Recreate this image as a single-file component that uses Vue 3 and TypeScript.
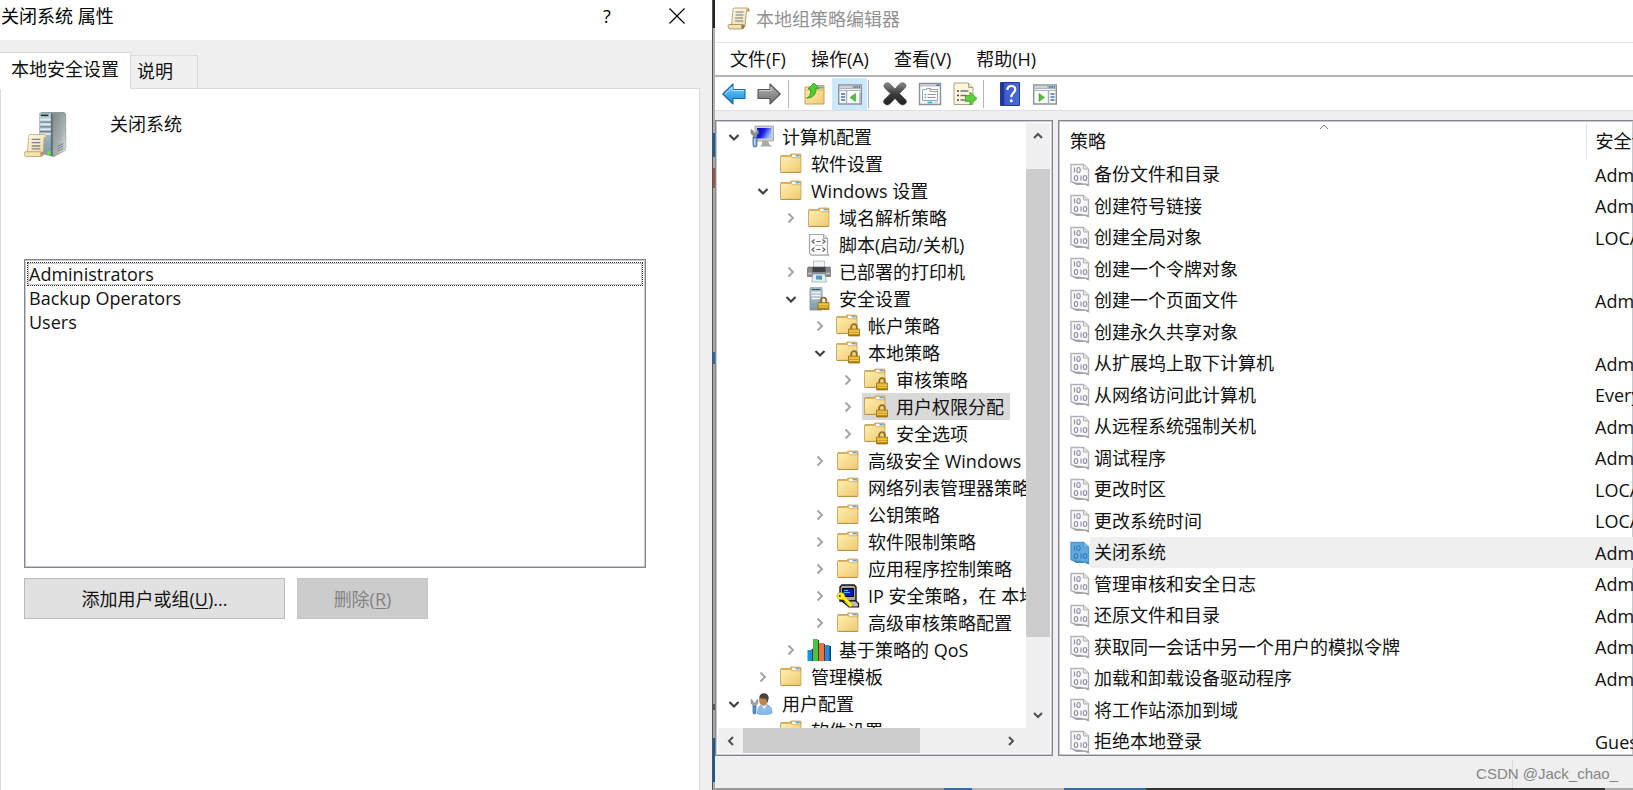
<script setup lang="ts">
import { ref } from 'vue'

interface TreeNode {
  level: number
  icon: string
  label: string
  state: 'open' | 'closed' | 'leaf'
}

interface Policy {
  name: string
  setting: string
}

const members = ['Administrators', 'Backup Operators', 'Users']
const menus = ['文件(F)', '操作(A)', '查看(V)', '帮助(H)']
const activeTab = ref(0)
const activeMember = ref(0)
const selectedNode = ref(10)
const selectedPolicy = ref(12)

const toolbar = [
  [
    { icon: 'back', label: '后退' },
    { icon: 'forward', label: '前进' },
  ],
  [
    { icon: 'up', label: '上移一级' },
    { icon: 'pane-left', label: '显示/隐藏控制台树', pressed: true },
  ],
  [
    { icon: 'delete', label: '删除' },
    { icon: 'props', label: '属性' },
    { icon: 'export', label: '导出列表' },
  ],
  [
    { icon: 'help', label: '帮助' },
    { icon: 'pane-right', label: '显示/隐藏操作窗格' },
  ],
]

const tree: TreeNode[] = [
  { level: 0, icon: 'computer', label: '计算机配置', state: 'open' },
  { level: 1, icon: 'folder', label: '软件设置', state: 'leaf' },
  { level: 1, icon: 'folder', label: 'Windows 设置', state: 'open' },
  { level: 2, icon: 'folder', label: '域名解析策略', state: 'closed' },
  { level: 2, icon: 'script', label: '脚本(启动/关机)', state: 'leaf' },
  { level: 2, icon: 'printer', label: '已部署的打印机', state: 'closed' },
  { level: 2, icon: 'secure', label: '安全设置', state: 'open' },
  { level: 3, icon: 'folder-lock', label: '帐户策略', state: 'closed' },
  { level: 3, icon: 'folder-lock', label: '本地策略', state: 'open' },
  { level: 4, icon: 'folder-lock', label: '审核策略', state: 'closed' },
  { level: 4, icon: 'folder-lock', label: '用户权限分配', state: 'closed' },
  { level: 4, icon: 'folder-lock', label: '安全选项', state: 'closed' },
  { level: 3, icon: 'folder', label: '高级安全 Windows', state: 'closed' },
  { level: 3, icon: 'folder', label: '网络列表管理器策略', state: 'leaf' },
  { level: 3, icon: 'folder', label: '公钥策略', state: 'closed' },
  { level: 3, icon: 'folder', label: '软件限制策略', state: 'closed' },
  { level: 3, icon: 'folder', label: '应用程序控制策略', state: 'closed' },
  { level: 3, icon: 'ipsec', label: 'IP 安全策略，在 本地计算机', state: 'closed' },
  { level: 3, icon: 'folder', label: '高级审核策略配置', state: 'closed' },
  { level: 2, icon: 'qos', label: '基于策略的 QoS', state: 'closed' },
  { level: 1, icon: 'folder', label: '管理模板', state: 'closed' },
  { level: 0, icon: 'user', label: '用户配置', state: 'open' },
  { level: 1, icon: 'folder', label: '软件设置', state: 'leaf' },
]

const policies: Policy[] = [
  { name: '备份文件和目录', setting: 'Administrators' },
  { name: '创建符号链接', setting: 'Administrators' },
  { name: '创建全局对象', setting: 'LOCAL SERVICE' },
  { name: '创建一个令牌对象', setting: '' },
  { name: '创建一个页面文件', setting: 'Administrators' },
  { name: '创建永久共享对象', setting: '' },
  { name: '从扩展坞上取下计算机', setting: 'Administrators' },
  { name: '从网络访问此计算机', setting: 'Everyone' },
  { name: '从远程系统强制关机', setting: 'Administrators' },
  { name: '调试程序', setting: 'Administrators' },
  { name: '更改时区', setting: 'LOCAL SERVICE' },
  { name: '更改系统时间', setting: 'LOCAL SERVICE' },
  { name: '关闭系统', setting: 'Administrators' },
  { name: '管理审核和安全日志', setting: 'Administrators' },
  { name: '还原文件和目录', setting: 'Administrators' },
  { name: '获取同一会话中另一个用户的模拟令牌', setting: 'Administrators' },
  { name: '加载和卸载设备驱动程序', setting: 'Administrators' },
  { name: '将工作站添加到域', setting: '' },
  { name: '拒绝本地登录', setting: 'Guest' },
]

const indent = (level: number) => ({ paddingLeft: `${8 + Math.round(level * 28.5)}px` })
</script>

<template>
  <svg class="defs" aria-hidden="true">
    <defs>
      <linearGradient id="gFolder" x1="0" y1="0" x2="1" y2="1">
        <stop offset="0" stop-color="#ffeeb0" /><stop offset="1" stop-color="#efca72" />
      </linearGradient>
      <linearGradient id="gGold" x1="0" y1="0" x2="0" y2="1">
        <stop offset="0" stop-color="#edc033" /><stop offset="1" stop-color="#b07a08" />
      </linearGradient>
      <linearGradient id="gBlue" x1="0" y1="0" x2="0" y2="1">
        <stop offset="0" stop-color="#7fd2fb" /><stop offset="1" stop-color="#1287d8" />
      </linearGradient>
      <linearGradient id="gGray" x1="0" y1="0" x2="0" y2="1">
        <stop offset="0" stop-color="#b4b4b4" /><stop offset="1" stop-color="#6e6e6e" />
      </linearGradient>
      <linearGradient id="gDark" x1="0" y1="0" x2="0" y2="1">
        <stop offset="0" stop-color="#8b8b8b" /><stop offset="0.5" stop-color="#3c3c3c" /><stop offset="1" stop-color="#222" />
      </linearGradient>
      <linearGradient id="gHelp" x1="0" y1="0" x2="1" y2="0">
        <stop offset="0" stop-color="#1c2f92" /><stop offset="0.25" stop-color="#3f5bcb" /><stop offset="1" stop-color="#4a6bdc" />
      </linearGradient>
      <linearGradient id="gScreen" x1="0" y1="0" x2="1" y2="0.4">
        <stop offset="0" stop-color="#0000b8" /><stop offset="0.5" stop-color="#1c1ce0" /><stop offset="1" stop-color="#9cc0ff" />
      </linearGradient>
      <linearGradient id="gServer" x1="0" y1="0" x2="1" y2="1">
        <stop offset="0" stop-color="#7c8889" /><stop offset="0.6" stop-color="#a9b2b2" /><stop offset="1" stop-color="#e2e6e5" />
      </linearGradient>
      <linearGradient id="gFront" x1="0" y1="0" x2="0" y2="1">
        <stop offset="0" stop-color="#c3d5de" /><stop offset="1" stop-color="#7d98a8" />
      </linearGradient>
      <linearGradient id="gPaper" x1="0" y1="0" x2="1" y2="1">
        <stop offset="0" stop-color="#fffbe9" /><stop offset="1" stop-color="#ecd9a2" />
      </linearGradient>
    </defs>

    <symbol id="folder" viewBox="0 0 24 24">
      <path d="M2 3.500h8.500l1.500-1.500h9a1 1 0 0 1 1 1V19.500a1 1 0 0 1-1 1H2.500a1 1 0 0 1-1-1V4.500z" fill="#dcb35b" stroke="#bd9549" stroke-width=".7" />
      <path d="M13 2.800h7.500v2.400H13z" fill="#fff" /><path d="M16.500 2.800h4v1.600h-4z" fill="#5aa7dc" />
      <path d="M2 5h10l1.500 1.300H21.500V20H2z" fill="url(#gFolder)" />
      <path d="M1.800 20.400h20" stroke="#b98f45" stroke-width="1" />
    </symbol>
    <symbol id="lock" viewBox="0 0 12 14">
      <path d="M3.200 7V4.500a2.800 2.800 0 0 1 5.600 0V7" fill="none" stroke="#8f6f25" stroke-width="1.800" />
      <path d="M.5 6.500h11V13.500H.5z" fill="url(#gGold)" stroke="#936506" stroke-width=".7" />
      <path d="M1 8.800h10M1 11h10" stroke="#f6d96c" stroke-width=".8" />
    </symbol>
    <symbol id="folder-lock" viewBox="0 0 24 24">
      <use href="#folder" x="-1" y="-1" width="24" height="24" />
      <use href="#lock" x="12" y="8" width="12" height="15" />
    </symbol>
    <symbol id="computer" viewBox="0 0 24 24">
      <path d="M5 1h18.500v15H5z" fill="#d3d1cb" stroke="#9a9a98" stroke-width=".8" />
      <path d="M7 3h14.500v10.500H7z" fill="url(#gScreen)" />
      <path d="M12 16h6l1.500 3.500 3 2H10l2-2z" fill="#aaa9a6" />
      <path d="M1 4.500v4l2.200 2v3h3.400v-3l2-2v-4L6.800 6v2.300H3.300V6z" fill="#8c9299" stroke="#5d646d" stroke-width=".5" />
      <path d="M3 12.500h4V20a2 2 0 0 1-4 0z" fill="#7fa9d8" stroke="#395f96" stroke-width=".8" />
      <path d="M4.700 14v6" stroke="#d9ecff" />
    </symbol>
    <symbol id="user" viewBox="0 0 24 24">
      <path d="M7.500 22c0-5.500 1.500-8.500 5-9.500h4c3.600 1 5.600 4 5.600 8.500-3 1.800-10 2-14.600 1z" fill="#8bbdea" stroke="#5d92c6" stroke-width=".6" />
      <path d="M11 12.500l3.200 5 2.800-5z" fill="#e6f2fd" />
      <ellipse cx="13.500" cy="8" rx="4.500" ry="5.800" fill="#bd8550" />
      <path d="M9.500 6c-.5-3 2-4.800 4.500-4.800 3.300 0 5.200 2.300 4.500 6l-1.300 3.500-1-4.200c-2 .4-4.700.3-6.700-.5z" fill="#4b4238" />
      <path d="M1.200 7.500v4L3 13.300V15h3v-1.700l1.700-1.800v-4L6 9v2H3V9z" fill="#a9adb2" stroke="#666c73" stroke-width=".6" />
      <path d="M3 14h3v6.500a1.500 1.500 0 0 1-3 0z" fill="#5f93cf" stroke="#33619e" stroke-width=".7" />
    </symbol>
    <symbol id="script" viewBox="0 0 24 24">
      <path d="M2.500 1.500h14l4 4V20l1 2.200H4L2.500 20z" fill="#fbfbfb" stroke="#a4a4a4" stroke-width="1.200" />
      <path d="M16.500 1.500v4h4" fill="#ddd" stroke="#a4a4a4" />
      <path d="M7.500 6.500L5 8.500l2.500 2M9.500 8.500h4M15.500 6.500l2.500 2-2.500 2M7.500 14.500L5 16.500l2.500 2M9.500 16.500h4M15.500 14.500l2.500 2-2.500 2" fill="none" stroke="#5c5c66" stroke-width="1.100" />
      <path d="M8 12.500h8" stroke="#9a9aa4" stroke-width=".7" />
    </symbol>
    <symbol id="printer" viewBox="0 0 24 24">
      <path d="M6.500 1h11v8h-11z" fill="#f2f3f4" stroke="#adb2b7" stroke-width=".8" />
      <path d="M1 7h22l.7 2v7.500H.3V9z" fill="#85888a" stroke="#5f6264" stroke-width=".6" />
      <path d="M5.500 7h13v5h-13z" fill="#3f4244" /><path d="M1 13.500h4M19 13.500h4" stroke="#c3c6c9" stroke-width="1.500" />
      <path d="M6 14h12l1.500 8h-15z" fill="#e3edf3" stroke="#8fa3b0" stroke-width=".7" />
      <path d="M9 15.500h6v4H9z" fill="#4a9bd6" /><path d="M12 17h3v2.500h-3z" fill="#56a55b" />
    </symbol>
    <symbol id="secure" viewBox="0 0 24 24">
      <path d="M3 1l2-1h9l1 1v22H3z" fill="url(#gFront)" stroke="#7c8d98" stroke-width=".8" />
      <path d="M4.500 2.500h9" stroke="#3d5362" stroke-width="1.400" /><path d="M4.500 5.500h9M4.500 8.500h9M4.500 11.500h9" stroke="#f4f8fa" stroke-width="1.500" />
      <use href="#lock" x="10" y="9" width="13" height="14" />
    </symbol>
    <symbol id="ipsec" viewBox="0 0 24 24">
      <path d="M6 1h12l2 2v14H4V3z" fill="#a9a9a9" stroke="#111" stroke-width="1.400" />
      <path d="M6.500 4.500h11v8h-11z" fill="#0a12d6" stroke="#000" /><path d="M8 6.500h4M8 8.500h6" stroke="#33c6ff" />
      <path d="M6 17h14l2.500 2.500V23H13z" fill="#bcbcbc" stroke="#111" stroke-width="1.200" />
      <path d="M1 12c0-3 4-4.500 7-2.500l1 3 8 8.500-2.500 2-3-2-1-2.500-4-3.500C4 16.500 1 15 1 12z" fill="#fff21a" stroke="#a99b00" stroke-width=".6" />
      <circle cx="3.800" cy="12" r="1.100" fill="#433" />
    </symbol>
    <symbol id="qos" viewBox="0 0 24 24">
      <path d="M4 12l2-1.500h1.500V23H5z" fill="#0b3a63" /><path d="M.5 12H5v11H.5z" fill="#1c8fe0" />
      <path d="M10 2h2v21h-2z" fill="#14561a" /><path d="M6 1h5v22H6z" fill="#4cc244" />
      <path d="M16 6h2v17h-2z" fill="#7b2c10" /><path d="M12 5h5v18h-5z" fill="#f0704a" />
      <path d="M22 8h2v15h-2z" fill="#0b3a63" /><path d="M18 7h4.500v16H18z" fill="#1c8fe0" />
    </symbol>
    <symbol id="bits" viewBox="0 0 20 24">
      <path d="M4.500 4.500v5M11 12.500v5" />
      <ellipse cx="8.500" cy="7" rx="1.700" ry="2.500" />
      <ellipse cx="6" cy="15" rx="1.700" ry="2.500" />
      <ellipse cx="15" cy="15" rx="1.700" ry="2.500" />
    </symbol>
    <symbol id="policy" viewBox="0 0 20 24">
      <path d="M1 1.500h12.500l5 4.500V22.500l-3-1.500H6.500L1 18.500z" fill="#f9f9f9" stroke="#b3b3b3" stroke-width="1.400" />
      <path d="M13.500 1.500V6h5" fill="#e4e4e4" stroke="#b3b3b3" />
      <path d="M1.500 18.500c3 2.500 8 0 11 2 1.600 1.200 4 1 6 .5v2l-4-1.200H6z" fill="#9d9d9d" />
      <use href="#bits" width="20" height="24" fill="none" stroke="#9292b0" stroke-width="1.200" />
    </symbol>
    <symbol id="policy-on" viewBox="0 0 20 24">
      <path d="M1 1.500h12.500l5 4.500V22.500l-3-1.500H6.500L1 18.500z" fill="#62abdf" stroke="#4b98d2" stroke-width="1.400" />
      <path d="M13.500 1.500V6h5" fill="#7dbde9" stroke="#4b98d2" />
      <path d="M1.500 18.500c3 2.500 8 0 11 2 1.600 1.200 4 1 6 .5v2l-4-1.200H6z" fill="#3b82b8" />
      <use href="#bits" width="20" height="24" fill="none" stroke="#3a7cba" stroke-width="1.200" />
    </symbol>
    <symbol id="scroll" viewBox="0 0 24 24">
      <path d="M6 2.500C6 1.500 7 1 8 1h12.500c1.500 0 2 1.500 1.500 3h-2.500L18 19.500H4.500z" fill="url(#gPaper)" stroke="#a98f5d" stroke-width=".8" />
      <path d="M19.500 4V2.500c0-1.200 2.700-1.200 2.700.5v1.500z" fill="#b99a5b" />
      <path d="M2 17.500h12.500c1.200 0 1.200 4 0 4.500H3c-2.200 0-2.400-4.500-1-4.500z" fill="#f3e3b4" stroke="#a08650" stroke-width=".8" />
      <path d="M14.500 17.500h3v2.500c0 1.500-1.300 2-3 2z" fill="#8d7850" />
      <path d="M8.500 5h8M8.500 8h8M8 11h8M8 14h8" stroke="#77778c" stroke-width="1.200" />
    </symbol>
    <symbol id="server" viewBox="0 0 48 48">
      <path d="M16 1l3-1h23l2 2v38L31 47 16 43z" fill="#8e9a9c" />
      <path d="M30 1.500h13.500V40L30 46z" fill="url(#gServer)" />
      <path d="M16 1.500h12V45l-12-3z" fill="url(#gFront)" /><path d="M28 1.500h2V46l-2-1z" fill="#5e6f7a" />
      <path d="M17.500 3.500h8" stroke="#21333e" stroke-width="1.800" />
      <path d="M17 8h11M17 13h11M17 18h11M17 23h11" stroke="#e3ecf1" stroke-width="1.800" /><path d="M17 10.500h11M17 15.500h11M17 20.500h11" stroke="#5f7582" />
      <path d="M35 36l6-3M35 38.500l6-3M35 41l6-3" stroke="#737f80" />
      <circle cx="26" cy="42.500" r="2" fill="#5cf01c" />
      <path d="M5 25.500c0-1.500 1-2 2-2h14c2 0 2.500 1.500 2 3h-2l-1 16H3.500z" fill="url(#gPaper)" stroke="#c0a062" stroke-width=".8" />
      <path d="M1.500 41.500H17c2 0 2 4.500 0 5H2c-2.300 0-2.300-5-.5-5z" fill="#f3e3ae" stroke="#b29558" stroke-width=".8" />
      <path d="M17 41.500h3.500v3c0 1.500-1.500 2-3.500 2z" fill="#b79d62" />
      <path d="M8 28.500h9M8 32h9M8 35.500h9M8 38.500h9" stroke="#81808f" stroke-width="1.400" />
    </symbol>
    <symbol id="back" viewBox="0 0 24 24">
      <path d="M.8 12L11 2v5.500h12v9H11V22z" fill="url(#gBlue)" stroke="#1769a8" stroke-width="1.100" stroke-linejoin="round" />
      <path d="M3 12l7-6.500V8.600h11.700" fill="none" stroke="#b5e6ff" />
    </symbol>
    <symbol id="forward" viewBox="0 0 24 24">
      <path d="M23.200 12L13 2v5.500H1v9h12V22z" fill="url(#gGray)" stroke="#555" stroke-width="1.100" stroke-linejoin="round" />
      <path d="M2.200 8.700H14V5.200" fill="none" stroke="#d6d6d6" />
    </symbol>
    <symbol id="up" viewBox="0 0 24 24">
      <path d="M2 5h7l1.500-1.500H21V22H2z" fill="url(#gFolder)" stroke="#c19a4c" stroke-width=".9" />
      <path d="M15 4.500h5.500v2H15z" fill="#69a9d3" /><path d="M2 8h19" stroke="#d9b25c" />
      <path d="M3.500 16c3-.8 4.500-3.500 4-8.500L5 6.800 11 1l5 5.500-3-.3c.5 6-3.500 10.300-9.500 9.800z" fill="#4fcb33" stroke="#2a8f18" stroke-width=".8" />
    </symbol>
    <symbol id="pane-left" viewBox="0 0 24 24">
      <path d="M.7 3h22.600v19H.7z" fill="#fafafa" stroke="#8b9198" stroke-width="1.400" />
      <path d="M1.500 3.500h21V9h-21z" fill="#aeb4bb" /><path d="M2 5h12M2 7.500h20" stroke="#f0f2f4" /><path d="M16 5h1.500M18.500 5H20M21 5h1" stroke="#3f6fae" stroke-width="1.500" />
      <path d="M8.500 9v13M22 10.500V21" stroke="#a8adb3" stroke-width="1.400" />
      <path d="M3 12h4M3 15h4M3 18h4" stroke="#3977b5" stroke-width="1.500" />
      <path d="M17.500 11.500v8L12 15.500z" fill="#4fc13a" stroke="#2f8f1f" stroke-width=".5" />
    </symbol>
    <symbol id="pane-right" viewBox="0 0 24 24">
      <path d="M.7 3h22.600v19H.7z" fill="#fafafa" stroke="#8b9198" stroke-width="1.400" />
      <path d="M1.500 3.500h21V9h-21z" fill="#aeb4bb" /><path d="M2 5h12M2 7.500h20" stroke="#f0f2f4" /><path d="M16 5h1.500M18.500 5H20M21 5h1" stroke="#3f6fae" stroke-width="1.500" />
      <path d="M15.500 9v13" stroke="#a8adb3" stroke-width="1.400" />
      <path d="M17.500 12h4M17.500 15h4M17.500 18h4" stroke="#3977b5" stroke-width="1.500" />
      <path d="M6 11.500v8l5.500-4z" fill="#4fc13a" stroke="#2f8f1f" stroke-width=".5" />
    </symbol>
    <symbol id="delete" viewBox="0 0 24 24">
      <path d="M4 .8C6 .5 7.500 2 12 7c4-5 6-6.500 8-6.200 2.500.5 3.800 2.700 2.500 4.400-2 2.300-3.700 4-6 6.300 2.500 2.500 4.500 4.500 6.500 6.500 1.500 2-.5 4.500-3 5-2.200.3-4-2-8-6.500-4 4.500-5.800 6.700-8 6.500-2.500-.4-4.500-3-3-5 2-2.200 4-4.200 6.500-6.500C5 9.200 3 7.500 1.300 5.200.2 3.500 1.500 1.200 4 .8z" fill="url(#gDark)" stroke="#4d4d4d" stroke-width=".6" />
    </symbol>
    <symbol id="props" viewBox="0 0 24 24">
      <path d="M1.500 1.500h21v21h-21z" fill="#fbfbfb" stroke="#8b9198" stroke-width="1.400" />
      <path d="M2 2h20v2.500H2z" fill="#c3c8cd" /><path d="M18.500 3.200h3" stroke="#36689f" stroke-width="1.500" />
      <path d="M4.500 7.500h4v-1h4v1h7v11h-15z" fill="#fff" stroke="#9aa1a8" /><path d="M12 6.500v3h7" fill="none" stroke="#9aa1a8" />
      <path d="M6.500 12.500h1.500M6.500 15.500h1.500" stroke="#4aa3df" stroke-width="1.500" /><path d="M9.500 12.500h8M9.500 15.500h8" stroke="#8c939a" stroke-width="1.200" />
      <path d="M9.500 19.500h5v2h-5z" fill="#28c1f0" /><path d="M16 19.500h4v2h-4z" fill="#cfd3d7" />
    </symbol>
    <symbol id="export" viewBox="0 0 24 24">
      <path d="M1 1h14.500L20 5.500V22.500H1z" fill="#fdf6d8" stroke="#a9a38c" />
      <path d="M15.500 1v4.500H20" fill="#e9dfb4" stroke="#a9a38c" />
      <path d="M4 9h2M4 13.500h2M4 18h2" stroke="#3c3c50" stroke-width="1.500" /><path d="M7.500 9h8M7.500 13.500h6M7.500 18h6" stroke="#70708c" stroke-width="1.400" />
      <path d="M12.500 13.500H17V10l7 6.500-7 6.500v-3.500h-4.500z" fill="#5ccd3f" stroke="#3c9c28" stroke-width=".8" />
    </symbol>
    <symbol id="help" viewBox="0 0 24 24">
      <path d="M2.500.5h19v23h-19z" fill="url(#gHelp)" stroke="#25389c" /><path d="M5 1v22" stroke="#16247a" />
      <path d="M9.300 8c.2-2.800 1.800-4 4-4 2.400 0 3.900 1.400 3.900 3.500 0 3.200-3.900 3.500-3.900 7.700" fill="none" stroke="#fff" stroke-width="2.200" />
      <circle cx="13.300" cy="18.700" r="1.500" fill="#fff" />
    </symbol>
  </svg>

  <main class="desktop">
    <section class="dialog" aria-label="关闭系统 属性">
      <header class="dialog-title">
        <h1>关闭系统 属性</h1>
        <button type="button" class="caption help" aria-label="帮助">?</button>
        <button type="button" class="caption" aria-label="关闭">
          <svg width="16" height="16" viewBox="0 0 16 16"><path d="M.5.5l15 15M15.500.5l-15 15" stroke="#000" stroke-width="1.200" /></svg>
        </button>
      </header>
      <div class="tabs" role="tablist">
        <button type="button" role="tab" class="tab" :class="{ active: activeTab === 0 }" :aria-selected="activeTab === 0" @click="activeTab = 0">本地安全设置</button>
        <button type="button" role="tab" class="tab" :class="{ active: activeTab === 1 }" :aria-selected="activeTab === 1" @click="activeTab = 1">说明</button>
      </div>
      <div class="page" role="tabpanel">
        <div class="policy-head">
          <svg width="46" height="48" aria-hidden="true"><use href="#server" /></svg>
          <p>关闭系统</p>
        </div>
        <ul class="members" role="listbox" aria-label="关闭系统">
          <li v-for="(m, i) in members" :key="m" role="option" :aria-selected="i === activeMember" :class="{ focus: i === activeMember }" @click="activeMember = i">{{ m }}</li>
        </ul>
        <div class="actions">
          <button type="button" class="push add">添加用户或组(<u>U</u>)...</button>
          <button type="button" class="push remove" disabled>删除(<u>R</u>)</button>
        </div>
      </div>
      <div class="edge"></div>
    </section>

    <section class="editor" aria-label="本地组策略编辑器">
      <header class="editor-title">
        <svg width="24" height="24" aria-hidden="true"><use href="#scroll" /></svg>
        <h2>本地组策略编辑器</h2>
      </header>
      <nav class="menu">
        <button v-for="m in menus" :key="m" type="button">{{ m }}</button>
      </nav>
      <div class="toolbar" role="toolbar">
        <div v-for="(group, g) in toolbar" :key="g" class="group">
          <button v-for="t in group" :key="t.icon" type="button" :aria-label="t.label" :class="{ pressed: 'pressed' in t }">
            <svg width="24" height="24"><use :href="'#' + t.icon" /></svg>
          </button>
        </div>
      </div>
      <div class="body">
        <div class="panel tree-panel">
          <ul class="tree" role="tree">
            <li v-for="(n, i) in tree" :key="i" role="treeitem" :aria-selected="i === selectedNode" :style="indent(n.level)" @click="selectedNode = i">
              <svg class="chevron" width="16" height="16" viewBox="0 0 16 16" aria-hidden="true">
                <path v-if="n.state === 'open'" d="M3.500 6L8 10.500 12.500 6" fill="none" stroke="#404040" stroke-width="2.200" />
                <path v-else-if="n.state === 'closed'" d="M5.500 3.500L10 8l-4.500 4.500" fill="none" stroke="#a6a6a6" stroke-width="2" />
              </svg>
              <span class="node" :class="{ selected: i === selectedNode }">
                <svg width="24" height="24" aria-hidden="true"><use :href="'#' + n.icon" /></svg>
                <span>{{ n.label }}</span>
              </span>
            </li>
          </ul>
          <div class="vbar">
            <button type="button" aria-label="向上滚动"><svg width="12" height="12" viewBox="0 0 12 12"><path d="M2 8l4-4 4 4" /></svg></button>
            <span></span>
            <div class="thumb"></div>
            <span></span>
            <button type="button" aria-label="向下滚动"><svg width="12" height="12" viewBox="0 0 12 12"><path d="M2 4l4 4 4-4" /></svg></button>
          </div>
          <div class="hbar">
            <button type="button" aria-label="向左滚动"><svg width="12" height="12" viewBox="0 0 12 12"><path d="M8 2L4 6l4 4" /></svg></button>
            <div class="thumb"></div>
            <span></span>
            <button type="button" aria-label="向右滚动"><svg width="12" height="12" viewBox="0 0 12 12"><path d="M4 2l4 4-4 4" /></svg></button>
          </div>
        </div>

        <div class="panel list-panel">
          <table>
            <colgroup><col /><col class="setting-col" /></colgroup>
            <thead>
              <tr>
                <th scope="col" class="name-head">
                  策略
                  <svg class="sort" width="12" height="8" viewBox="0 0 12 8" aria-hidden="true"><path d="M2 6l4-4 4 4" fill="none" stroke="#777" /></svg>
                </th>
                <th scope="col" class="setting">安全设置</th>
              </tr>
            </thead>
            <tbody>
              <tr v-for="(p, i) in policies" :key="p.name" :class="{ selected: i === selectedPolicy }" @click="selectedPolicy = i">
                <td>
                  <div class="policy">
                    <svg width="20" height="24" aria-hidden="true"><use :href="i === selectedPolicy ? '#policy-on' : '#policy'" /></svg>
                    <span>{{ p.name }}</span>
                  </div>
                </td>
                <td class="setting">{{ p.setting }}</td>
              </tr>
            </tbody>
          </table>
        </div>
      </div>
      <footer class="status"><span class="watermark">CSDN @Jack_chao_</span></footer>
      <div class="underlay"></div>
    </section>
  </main>
</template>

<style>
body {
  margin: 0;
  overflow: hidden;
}
</style>

<style scoped>
.defs {
  position: absolute;
  width: 0;
  height: 0;
}
.desktop {
  display: grid;
  grid-template-columns: minmax(0, 715fr) minmax(0, 918fr);
  height: 100vh;
  overflow: hidden;
  background: #efefef;
  color: #111;
  font-family: "Open Sans", "Noto Sans CJK SC", sans-serif;
  font-size: 18px;
  line-height: 24px;
}
h1, h2, p, ul {
  margin: 0;
  padding: 0;
  font-size: inherit;
  font-weight: 400;
  list-style: none;
}
button {
  margin: 0;
  padding: 0;
  border: 0;
  background: none;
  color: inherit;
  font: inherit;
}
svg {
  display: block;
  flex: none;
}

/* properties dialog */
.dialog {
  display: grid;
  grid-template: 40px 48px 1fr / minmax(0, 1fr) 12px 3px;
  min-width: 0;
}
.dialog-title {
  grid-column: 1 / 3;
  display: flex;
  align-items: center;
  padding: 0 10px 8px 1px;
  background: #fff;
  color: #000;
}
.dialog-title h1 {
  flex: 1;
}
.caption {
  display: grid;
  place-items: center;
  width: 50px;
  height: 32px;
}
.caption.help {
  width: 90px;
}
.tabs {
  grid-column: 1 / 3;
  display: flex;
  align-items: flex-end;
}
.tab {
  position: relative;
  height: 33px;
  padding: 0 24px 2px 6px;
  border: 1px solid #dcdcdc;
  border-width: 1px 1px 0 0;
  background: #f0f0f0;
}
.tab.active {
  z-index: 1;
  height: 37px;
  margin-bottom: -1px;
  padding: 0 11px 4px;
  background: #fff;
}
.page {
  padding: 22px 53px 0 23px;
  border: 1px solid #dcdcdc;
  border-bottom: 0;
  background: #fff;
}
.policy-head {
  display: flex;
  gap: 40px;
  height: 148px;
}
.policy-head p {
  padding-top: 1px;
}
.members {
  box-sizing: border-box;
  height: 309px;
  padding: 2px;
  border: 1px solid #828790;
  box-shadow: inset 0 0 0 1px #c6c9ce;
}
.members li {
  padding: 0 1px;
  border: 1px solid transparent;
  line-height: 22px;
}
.members li.focus {
  border: 1px dotted #333;
  box-shadow: inset 0 0 0 1px #c8c8c8;
}
.actions {
  display: flex;
  gap: 12px;
  margin-top: 10px;
}
.push {
  height: 41px;
  border: 1px solid #bcbcbc;
  background: #e1e1e1;
}
.push.add {
  width: 261px;
}
.push.remove {
  width: 131px;
  border-color: #c4c4c4;
  background: #ccc;
  color: #838383;
}
.push u {
  text-underline-offset: 2px;
}
.edge {
  grid-area: 1 / 3 / 4 / 4;
  border-left: 1px solid #555;
  background: linear-gradient(#222 28px, #b0b0b0 28px 133px, #185c9b 133px 157px, #aaa 157px 168px, #a5503e 168px 188px, #aaa 188px 352px, #1b6cb0 352px 364px, #a6a6a6 364px 704px, #555 704px 710px, #a6a6a6 710px 738px, #14599a 738px 782px, #aaa 782px);
}

/* policy editor window */
.editor {
  display: flex;
  flex-direction: column;
  min-width: 0;
  min-height: 0;
}
.editor-title {
  display: flex;
  align-items: center;
  gap: 5px;
  height: 37px;
  padding: 0 0 5px 12px;
  border-bottom: 1px solid #e4e4e4;
  background: #fff;
  color: #929292;
}
.menu {
  display: flex;
  gap: 25px;
  height: 32px;
  padding-left: 15px;
  border-bottom: 2px solid #b4b4b8;
  background: #fff;
}
.toolbar {
  display: flex;
  height: 32px;
  padding: 1px 0 0 1px;
  border-bottom: 1px solid #dedede;
  background: #fff;
}
.group {
  display: flex;
}
.group + .group::before {
  content: "";
  width: 1px;
  margin: 2px 8px 2px 2px;
  background: #b5b5b5;
}
.group + .group + .group::before {
  margin: 2px 8px 2px 1px;
}
.group button {
  display: grid;
  place-items: center;
  width: 35px;
}
.group button.pressed {
  background: #cce8ff;
}
.body {
  flex: 1;
  display: grid;
  grid-template: minmax(0, 1fr) / minmax(0, 338fr) minmax(0, 575fr);
  gap: 5px;
  min-height: 0;
  padding-top: 9px;
}
.panel {
  padding: 2px;
  border: 1px solid #828790;
  background: #fff;
  box-shadow: inset 0 0 0 1px #c6c9ce;
  overflow: hidden;
}
.tree-panel {
  display: grid;
  grid-template: minmax(0, 1fr) 25px / minmax(0, 1fr) 24px;
}
.tree {
  overflow: hidden;
}
.tree li {
  display: flex;
  align-items: center;
  gap: 6px;
  height: 27px;
  white-space: nowrap;
}
.node {
  display: flex;
  align-items: center;
  gap: 8px;
  height: 27px;
  padding: 0 6px 0 2px;
}
.node.selected {
  background: #d9d9d9;
}
.vbar, .hbar {
  display: grid;
  background: #f0f0f0;
}
.vbar {
  grid-template-rows: 26px 20fr 468fr 65fr 26px;
}
.hbar {
  grid-column: 1 / 3;
  grid-template-columns: 25px 177fr 78fr 26px 26px;
}
.vbar button, .hbar button {
  display: grid;
  place-items: center;
}
.vbar path, .hbar path {
  fill: none;
  stroke: #505050;
  stroke-width: 2;
}
.thumb {
  background: #cdcdcd;
}
.list-panel {
  border-right: 0;
  padding-right: 0;
}
table {
  width: 100%;
  table-layout: fixed;
  border-collapse: collapse;
}
.setting-col {
  width: 47px;
}
th {
  height: 36px;
  padding: 0 0 0 9px;
  font-weight: 400;
  text-align: left;
}
.name-head {
  position: relative;
  border-right: 1px solid #e5e5e5;
}
.sort {
  position: absolute;
  top: 0;
  left: 49%;
}
td {
  height: 31px;
  padding: 0;
}
tbody tr:nth-child(even) td {
  height: 32px;
}
.policy {
  display: flex;
  align-items: center;
  padding-left: 9px;
}
.policy span {
  flex: 1;
  padding-left: 4px;
  line-height: 31px;
}
tr.selected .policy span, tr.selected .setting {
  background: #efefef;
}
.setting {
  padding-left: 9px;
  overflow: hidden;
  white-space: nowrap;
}
.status {
  display: flex;
  justify-content: flex-end;
  height: 32px;
  padding-right: 15px;
  background: linear-gradient(#dadada, #dadada) right 120px top 4px / 1px 28px no-repeat #efefef;
  color: #858585;
  font: 15px/36px "Liberation Sans", sans-serif;
}
.underlay {
  height: 2px;
  background: linear-gradient(90deg, #999 0 25%, #2d6da8 25% 28%, #bbb 28% 38%, #2d6da8 38% 47%, #333 47% 97%, #aaa 97%);
}
</style>
